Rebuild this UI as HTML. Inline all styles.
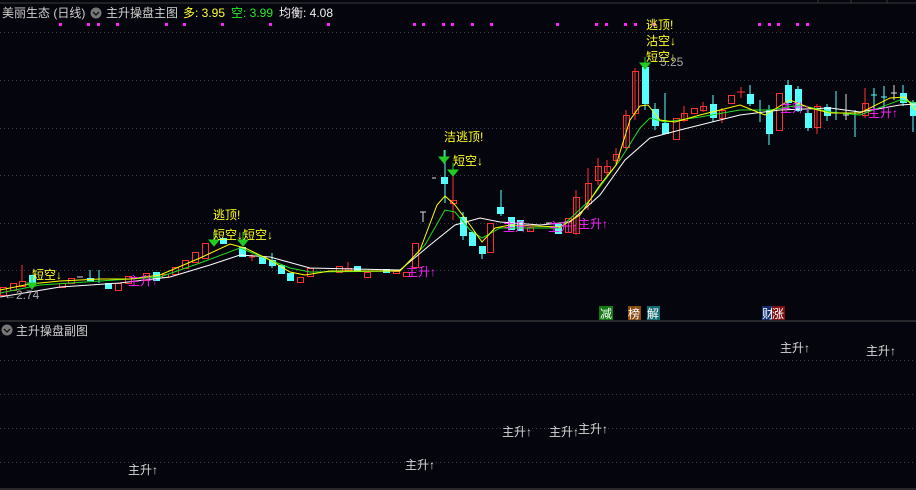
<!DOCTYPE html>
<html><head><meta charset="utf-8"><style>
html,body{margin:0;padding:0;background:#05050d;}
svg{display:block;}
text{font-family:"Liberation Sans","Noto Sans CJK SC",sans-serif;}
</style></head><body>
<svg width="916" height="490" viewBox="0 0 916 490" xmlns="http://www.w3.org/2000/svg">
<rect width="916" height="490" fill="#05050d"/>
<line x1="0" y1="3" x2="916" y2="3" stroke="#3a3a3a"/>
<line x1="818" y1="0" x2="818" y2="3" stroke="#3a3a3a"/><line x1="851" y1="0" x2="851" y2="3" stroke="#3a3a3a"/><line x1="887" y1="0" x2="887" y2="3" stroke="#3a3a3a"/>
<g stroke="#3c3c4a" stroke-dasharray="1,3">
<line x1="0" y1="32.5" x2="916" y2="32.5"/><line x1="0" y1="80.5" x2="916" y2="80.5"/><line x1="0" y1="128.5" x2="916" y2="128.5"/><line x1="0" y1="175.5" x2="916" y2="175.5"/><line x1="0" y1="223.5" x2="916" y2="223.5"/><line x1="0" y1="270.5" x2="916" y2="270.5"/>
<line x1="0" y1="360.5" x2="916" y2="360.5"/><line x1="0" y1="394.5" x2="916" y2="394.5"/><line x1="0" y1="428.5" x2="916" y2="428.5"/><line x1="0" y1="462.5" x2="916" y2="462.5"/>
</g>
<line x1="0" y1="321" x2="916" y2="321" stroke="#4a4a4a"/>
<line x1="0" y1="489" x2="916" y2="489" stroke="#4a4a4a"/>
<!-- header -->
<text x="2" y="17" font-size="12" fill="#d0d0d0">美丽生态 (日线)</text>
<circle cx="96" cy="13" r="5.5" fill="#777"/><path d="M93 12 l3 3 l3 -3" stroke="#111" fill="none" stroke-width="1.3"/>
<text x="106" y="17" font-size="12" fill="#d0d0d0">主升操盘主图</text>
<text x="183" y="17" font-size="12" fill="#ffff33">多: 3.95</text>
<text x="231" y="17" font-size="12" fill="#22ee22">空: 3.99</text>
<text x="279" y="17" font-size="12" fill="#f0f0f0">均衡: 4.08</text>
<g fill="#ff22ff">
<rect x="59" y="23" width="3" height="3"/><rect x="87" y="23" width="3" height="3"/><rect x="97" y="23" width="3" height="3"/><rect x="116" y="23" width="3" height="3"/><rect x="165" y="23" width="3" height="3"/><rect x="183" y="23" width="3" height="3"/><rect x="221" y="23" width="3" height="3"/><rect x="269" y="23" width="3" height="3"/><rect x="327" y="23" width="3" height="3"/><rect x="413" y="23" width="3" height="3"/><rect x="422" y="23" width="3" height="3"/><rect x="442" y="23" width="3" height="3"/><rect x="451" y="23" width="3" height="3"/><rect x="471" y="23" width="3" height="3"/><rect x="490" y="23" width="3" height="3"/><rect x="556" y="23" width="3" height="3"/><rect x="595" y="23" width="3" height="3"/><rect x="605" y="23" width="3" height="3"/><rect x="624" y="23" width="3" height="3"/><rect x="634" y="23" width="3" height="3"/><rect x="653" y="23" width="3" height="3"/><rect x="758" y="23" width="3" height="3"/><rect x="768" y="23" width="3" height="3"/><rect x="777" y="23" width="3" height="3"/><rect x="796" y="23" width="3" height="3"/><rect x="806" y="23" width="3" height="3"/>
</g>
<!-- red candles (hollow) -->
<g stroke="#ff3030" fill="none" stroke-width="1">
<line x1="22" y1="265" x2="22" y2="281"/>
<rect x="0.5" y="287.5" width="6" height="8"/><rect x="10.5" y="283.5" width="6" height="7"/><rect x="19.5" y="281.5" width="6" height="5"/>
<rect x="59.5" y="283.5" width="6" height="4"/><rect x="68.5" y="278.5" width="6" height="5"/>
<rect x="115.5" y="283.5" width="6" height="7"/><rect x="125.5" y="276.5" width="6" height="7"/><rect x="143.5" y="273.5" width="6" height="7"/><rect x="162.5" y="274.5" width="6" height="3"/>
<rect x="172.5" y="267.5" width="6" height="7"/><rect x="182.5" y="260.5" width="6" height="8"/><rect x="192.5" y="252.5" width="6" height="10"/><rect x="202.5" y="243.5" width="6" height="15"/>
<line x1="249" y1="257" x2="255" y2="257"/><line x1="252" y1="254" x2="252" y2="261"/>
<rect x="297.5" y="277.5" width="6" height="5"/><rect x="307.5" y="268.5" width="6" height="8"/><rect x="336.5" y="266.5" width="6" height="6"/><line x1="348" y1="262" x2="348" y2="270"/><rect x="345.5" y="268.5" width="6" height="2"/>
<rect x="364.5" y="272.5" width="6" height="5"/><rect x="393.5" y="271.5" width="6" height="2"/><rect x="403.5" y="272.5" width="6" height="4"/>
<rect x="412.5" y="243.5" width="6" height="24"/>
<line x1="453" y1="170" x2="453" y2="220"/><rect x="450.5" y="200.5" width="6" height="3"/>
<rect x="487.5" y="223.5" width="6" height="29"/>
<rect x="527.5" y="227.5" width="6" height="4"/><rect x="565.5" y="218.5" width="6" height="14"/>
<line x1="576" y1="190" x2="576" y2="235"/><rect x="573.5" y="197.5" width="6" height="36"/>
<line x1="588" y1="168" x2="588" y2="210"/><rect x="585.5" y="183.5" width="6" height="20"/>
<line x1="598" y1="158" x2="598" y2="185"/><rect x="595.5" y="166.5" width="6" height="14"/>
<line x1="607" y1="160" x2="607" y2="176"/><rect x="604.5" y="166.5" width="6" height="6"/>
<line x1="616" y1="148" x2="616" y2="165"/><rect x="613.5" y="154.5" width="6" height="6"/>
<line x1="626" y1="110" x2="626" y2="150"/><rect x="623.5" y="115.5" width="6" height="32"/>
<line x1="635" y1="68" x2="635" y2="120"/><rect x="632.5" y="71.5" width="6" height="42"/>
<rect x="673.5" y="118.5" width="6" height="21"/>
<line x1="684" y1="106" x2="684" y2="122"/><rect x="681.5" y="113.5" width="6" height="7"/>
<rect x="691.5" y="108.5" width="6" height="5"/><line x1="703" y1="102" x2="703" y2="112"/><rect x="700.5" y="106.5" width="6" height="4"/>
<line x1="722" y1="108" x2="722" y2="123"/><rect x="719.5" y="110.5" width="6" height="8"/>
<rect x="728.5" y="95.5" width="6" height="8"/><line x1="737" y1="92" x2="745" y2="92"/><line x1="741" y1="87" x2="741" y2="98"/>
<rect x="776.5" y="93.5" width="6" height="37"/>
<line x1="817" y1="104" x2="817" y2="134"/><rect x="814.5" y="106.5" width="6" height="21"/>
<line x1="865" y1="88" x2="865" y2="118"/><rect x="862.5" y="103.5" width="6" height="12"/>
</g>
<!-- cyan candles -->
<g fill="#55ffff" stroke="#55ffff">
<rect x="29.5" y="275.5" width="6" height="8"/>
<line x1="90" y1="270" x2="90" y2="281"/><rect x="87.5" y="278.5" width="6" height="2"/>
<line x1="99" y1="270" x2="99" y2="283"/>
<rect x="105.5" y="283.5" width="6" height="5"/><rect x="153.5" y="272.5" width="6" height="8"/>
<rect x="220.5" y="238.5" width="6" height="5"/><rect x="239.5" y="247.5" width="6" height="9"/>
<rect x="259.5" y="257.5" width="6" height="6"/><line x1="272" y1="253" x2="272" y2="268"/><rect x="269.5" y="260.5" width="6" height="5"/>
<rect x="278.5" y="265.5" width="6" height="8"/><rect x="287.5" y="273.5" width="6" height="7"/>
<rect x="354.5" y="266.5" width="6" height="5"/><rect x="383.5" y="269.5" width="6" height="3"/>
<line x1="445" y1="150" x2="445" y2="203"/><rect x="441.5" y="177.5" width="6" height="6"/>
<line x1="463" y1="212" x2="463" y2="240"/><rect x="460.5" y="217.5" width="6" height="18"/>
<rect x="469.5" y="232.5" width="6" height="13"/><line x1="482" y1="246" x2="482" y2="259"/><rect x="479.5" y="246.5" width="6" height="7"/>
<line x1="501" y1="190" x2="501" y2="216"/><rect x="497.5" y="207.5" width="6" height="6"/>
<rect x="508.5" y="217.5" width="6" height="12"/><rect x="517.5" y="220.5" width="6" height="10"/>
<rect x="555.5" y="224.5" width="6" height="9"/>
<line x1="645" y1="62" x2="645" y2="110"/><rect x="642.5" y="67.5" width="6" height="36"/>
<line x1="655" y1="103" x2="655" y2="130"/><rect x="652.5" y="109.5" width="6" height="16"/>
<line x1="665" y1="93" x2="665" y2="134"/><rect x="662.5" y="123.5" width="6" height="10"/>
<line x1="713" y1="95" x2="713" y2="122"/><rect x="710.5" y="104.5" width="6" height="13"/>
<line x1="750" y1="85" x2="750" y2="106"/><rect x="747.5" y="94.5" width="6" height="9"/>
<line x1="760" y1="100" x2="760" y2="122"/>
<line x1="769" y1="105" x2="769" y2="145"/><rect x="766.5" y="110.5" width="6" height="23"/>
<line x1="788" y1="80" x2="788" y2="110"/><rect x="785.5" y="85.5" width="6" height="17"/>
<line x1="798" y1="86" x2="798" y2="112"/><rect x="795.5" y="89.5" width="6" height="21"/>
<line x1="808" y1="110" x2="808" y2="131"/><rect x="805.5" y="113.5" width="6" height="14"/>
<line x1="827" y1="104" x2="827" y2="121"/><rect x="824.5" y="107.5" width="6" height="8"/>
<line x1="836" y1="91" x2="836" y2="120"/>
<line x1="855" y1="110" x2="855" y2="137"/>
<line x1="874" y1="88" x2="874" y2="112"/><line x1="871" y1="95" x2="877" y2="95"/>
<line x1="884" y1="86" x2="884" y2="108"/><line x1="881" y1="97" x2="887" y2="97"/>
<line x1="903" y1="85" x2="903" y2="106"/><rect x="900.5" y="93.5" width="6" height="9"/>
<line x1="913" y1="100" x2="913" y2="132"/><rect x="910.5" y="102.5" width="6" height="13"/>
</g>
<g stroke="#ddd">
<line x1="77" y1="277" x2="83" y2="277"/><line x1="423" y1="212" x2="423" y2="222"/><line x1="420" y1="212" x2="426" y2="212"/>
<line x1="432" y1="178" x2="436" y2="178"/><line x1="546" y1="223" x2="552" y2="223"/><line x1="833" y1="113" x2="839" y2="113"/><line x1="843" y1="115" x2="849" y2="115"/><line x1="846" y1="94" x2="846" y2="120"/><line x1="891" y1="93" x2="897" y2="93"/><line x1="894" y1="85" x2="894" y2="100"/>
</g>
<!-- MAs -->
<polyline fill="none" stroke="#ffffff" stroke-width="1" points="0,297 60,287 120,283 170,277 210,265 240,255 270,257 310,268 400,270 430,245 455,225 480,218 500,222 540,225 570,222 600,195 625,160 650,138 680,130 740,115 780,110 830,108 860,112 900,105 916,104"/>
<polyline fill="none" stroke="#22dd22" stroke-width="1" points="0,293 40,285 100,281 160,277 200,263 240,248 260,256 290,268 310,272 400,271 425,245 445,210 455,212 470,230 482,238 500,228 560,228 590,200 620,160 640,128 650,118 665,122 700,117 740,110 770,110 800,105 830,112 860,115 900,100 916,103"/>
<polyline fill="none" stroke="#ffff00" stroke-width="1" points="0,290 30,284 60,281 100,279 130,279 160,275 200,258 230,244 245,248 270,260 290,272 305,275 330,271 400,271 420,250 437,205 445,196 455,205 470,225 482,242 495,228 510,225 560,227 580,215 600,185 616,165 630,120 640,106 648,105 660,120 675,122 700,115 740,105 765,115 790,100 810,108 830,113 860,113 890,98 905,97 916,110"/>
<!-- arrows -->
<g fill="#22cc22" stroke="#22cc22">
<line x1="32" y1="276" x2="32" y2="284"/><path d="M27 283 h10 l-5 6z"/>
<line x1="214" y1="232" x2="214" y2="240"/><path d="M209 240 h10 l-5 6z"/>
<line x1="243" y1="232" x2="243" y2="240"/><path d="M238 240 h10 l-5 6z"/>
<line x1="444" y1="150" x2="444" y2="157"/><path d="M439 157 h10 l-5 6z"/>
<line x1="453" y1="163" x2="453" y2="170"/><path d="M448 170 h10 l-5 6z"/>
<line x1="645" y1="57" x2="645" y2="63"/><path d="M640 63 h10 l-5 6z"/>
</g>
<!-- labels -->
<g font-size="12" fill="#ffff22">
<text x="32" y="279">短空↓</text>
<text x="213" y="219">逃顶!</text>
<text x="213" y="239">短空↓短空↓</text>
<text x="444" y="141">洁逃顶!</text>
<text x="453" y="165">短空↓</text>
<text x="646" y="29">逃顶!</text>
<text x="646" y="45">沽空↓</text>
<text x="646" y="61">短空↓</text>
</g>
<text x="660" y="66" font-size="12" fill="#aaa">5.25</text>
<text x="4" y="299" font-size="12" fill="#aaa">←2.74</text>
<g font-size="12" fill="#ff22ff">
<text x="128" y="285">主升↑</text>
<text x="406" y="276">主升↑</text>
<text x="503" y="231">主升↑</text>
<text x="548" y="231">主升↑</text>
<text x="578" y="228">主升↑</text>
<text x="780" y="112">主升↑</text>
<text x="868" y="117">主升↑</text>
</g>
<!-- bottom badges -->
<g font-size="12">
<rect x="599" y="306" width="14" height="14" fill="#107a10"/><text x="600" y="318" fill="#fff">减</text>
<rect x="628" y="306" width="13" height="14" fill="#8a4a10"/><text x="628" y="318" fill="#fff">榜</text>
<rect x="647" y="306" width="13" height="14" fill="#106a70"/><text x="647" y="318" fill="#fff">解</text>
<rect x="762" y="306" width="10" height="14" fill="#103070"/><text x="762" y="318" fill="#fff">财</text>
<rect x="772" y="306" width="13" height="14" fill="#801010"/><text x="772" y="318" fill="#fff">涨</text>
</g>
<!-- sub pane -->
<circle cx="7" cy="330" r="5.5" fill="#777"/><path d="M4 329 l3 3 l3 -3" stroke="#111" fill="none" stroke-width="1.3"/>
<text x="16" y="335" font-size="12" fill="#d0d0d0">主升操盘副图</text>
<g font-size="12" fill="#d8d8d8">
<text x="128" y="474">主升↑</text>
<text x="405" y="469">主升↑</text>
<text x="502" y="436">主升↑</text>
<text x="549" y="436">主升↑</text>
<text x="578" y="433">主升↑</text>
<text x="780" y="352">主升↑</text>
<text x="866" y="355">主升↑</text>
</g>
</svg>
</body></html>
